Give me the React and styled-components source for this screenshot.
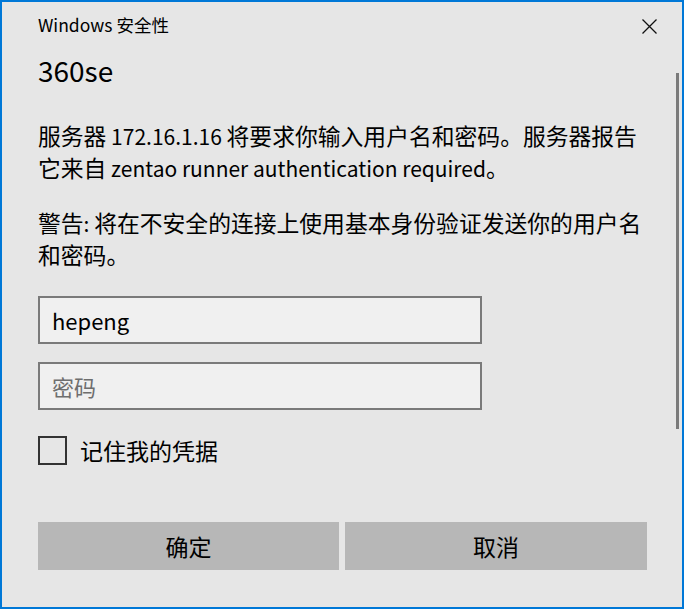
import React from "react";
import styled, { createGlobalStyle } from "styled-components";

const GlobalStyle = createGlobalStyle`
  body {
    margin: 0;
    background: #e6e6e6;
  }
  * {
    box-sizing: border-box;
  }
`;

const font = `"Noto Sans CJK SC", "Noto Sans", sans-serif`;

function App() {
  return (
    <>
      <GlobalStyle />
      <Window>
        <Header>
          <Caption>Windows 安全性</Caption>
          <CloseButton aria-label="关闭">
            <svg width="15" height="15" viewBox="0 0 15 15">
              <path d="M0.5 0.5 L14.5 14.5 M14.5 0.5 L0.5 14.5" stroke="#111" strokeWidth="1.3" fill="none" />
            </svg>
          </CloseButton>
        </Header>
        <AppName>360se</AppName>
        <Message $gap={33}>
          服务器<Latin> 172.16.1.16 </Latin>将要求你输入用户名和密码。服务器报告
          <br />
          它来自<Latin> zentao runner authentication required</Latin>。
        </Message>
        <Message $gap={23}>
          警告<Latin>: </Latin>将在不安全的连接上使用基本身份验证发送你的用户名
          <br />
          和密码。
        </Message>
        <Field $gap={26} value="hepeng" readOnly />
        <Field $gap={18} placeholder="密码" type="password" />
        <CheckRow>
          <CheckBox />
          <CheckLabel>记住我的凭据</CheckLabel>
        </CheckRow>
        <Buttons>
          <Button>确定</Button>
          <Button>取消</Button>
        </Buttons>
        <ScrollThumb />
      </Window>
    </>
  );
}

export default App;

const Window = styled.div`
  position: relative;
  width: 684px;
  height: 609px;
  border: 2px solid #0078d7;
  background: #e6e6e6;
  padding: 12px 35px 0 36px;
  display: flex;
  flex-direction: column;
  font-family: ${font};
  color: #000;
`;

const Header = styled.div`
  display: flex;
  justify-content: space-between;
  align-items: center;
  height: 22px;
`;

const Caption = styled.div`
  font-size: 17.5px;
  line-height: 22px;
`;

const CloseButton = styled.div`
  width: 15px;
  height: 15px;
  margin-right: -10px;
  margin-top: 3px;
  display: flex;
`;

const AppName = styled.div`
  margin-top: 17px;
  font-size: 28px;
  line-height: 34px;
`;

const Message = styled.div`
  margin-top: ${(p) => p.$gap}px;
  font-size: 22.8px;
  line-height: 31px;
  white-space: nowrap;
`;

const Latin = styled.span`
  font-size: 21px;
`;

const Field = styled.input`
  margin-top: ${(p) => p.$gap}px;
  width: 444px;
  height: 48px;
  border: 2px solid #7a7a7a;
  background: #f0f0f0;
  padding: 0 12px;
  font-family: ${font};
  font-size: 22px;
  color: #000;
  outline: none;

  &::placeholder {
    color: #6e6e6e;
  }
`;

const CheckRow = styled.div`
  margin-top: 26px;
  display: flex;
  align-items: center;
  gap: 13px;
  height: 29px;
`;

const CheckBox = styled.div`
  width: 29px;
  height: 29px;
  border: 2px solid #333;
`;

const CheckLabel = styled.div`
  font-size: 23px;
  line-height: 29px;
`;

const Buttons = styled.div`
  margin-top: 57px;
  display: grid;
  grid-template-columns: 301px 302px;
  gap: 6px;
`;

const Button = styled.div`
  height: 48px;
  background: #b7b7b7;
  display: flex;
  align-items: center;
  justify-content: center;
  font-size: 23px;
`;

const ScrollThumb = styled.div`
  position: absolute;
  right: 3px;
  top: 71px;
  width: 3px;
  height: 356px;
  background: #7a7a7a;
`;
